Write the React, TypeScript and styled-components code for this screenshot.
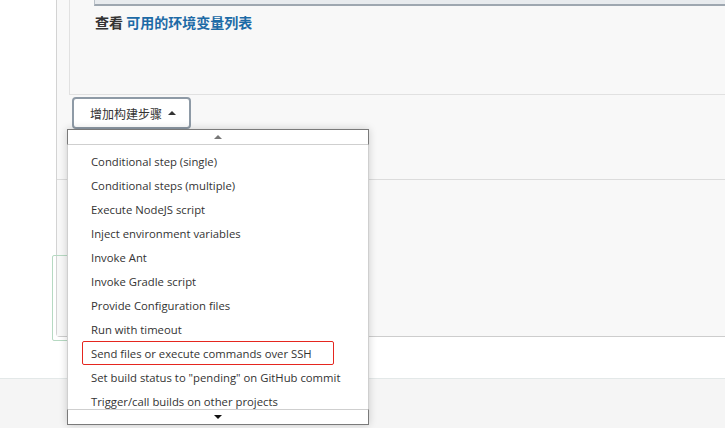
import React from "react";
import styled, { createGlobalStyle } from "styled-components";

const Global = createGlobalStyle`
  html, body { margin: 0; padding: 0; background: #fff; }
  body { width: 725px; height: 428px; overflow: hidden; font-family: "Open Sans", "Noto Sans CJK SC", sans-serif; }
`;

const Page = styled.div`
  position: relative;
  width: 725px;
  height: 428px;
  display: flex;
  flex-direction: column;
  background: #fff;
  overflow: hidden;
`;

const Upper = styled.div`
  height: 378px;
  display: flex;
  flex-direction: column;
  background: #fff;
`;

const Panel = styled.div`
  margin-left: 56px;
  height: 337px;
  box-sizing: border-box;
  border-left: 1px solid #d3d3d3;
  border-bottom: 1px solid #cdcdcd;
  border-bottom-left-radius: 4px;
  background: #f8f8f8;
  display: flex;
  flex-direction: column;
`;

const BuildSection = styled.div`
  padding-left: 12px;
  height: 95px;
  box-sizing: border-box;
  display: flex;
`;

const InnerBox = styled.div`
  flex: 1;
  border-left: 1px solid #e1e1e1;
  border-bottom: 1px solid #e1e1e1;
  padding-left: 24px;
  display: flex;
  flex-direction: column;
`;

const TextareaEdge = styled.div`
  height: 4px;
  background: #e8ebee;
  border-bottom: 2px solid #9ea7b0;
  border-left: 1px solid #b9c0c7;
`;

const HelpLine = styled.div`
  margin-top: 6px;
  height: 20px;
  line-height: 20px;
  font-family: "Noto Sans CJK SC", sans-serif;
  font-size: 14px;
  font-weight: 700;
  color: #333;
  padding-left: 1px;
`;

const HelpLink = styled.a`
  color: #1d6aa6;
  text-decoration: none;
`;

const ButtonRow = styled.div`
  height: 85px;
  box-sizing: border-box;
  padding: 2px 0 0 15px;
  border-bottom: 1px solid #dcdcdc;
`;

const AddButton = styled.button`
  width: 119px;
  height: 32px;
  box-sizing: border-box;
  border: 2px solid #8e9aa6;
  border-radius: 4px;
  background: #fff;
  display: flex;
  align-items: center;
  padding: 0 0 0 16px;
  gap: 6px;
  font-family: "Noto Sans CJK SC", sans-serif;
  font-size: 12px;
  color: #333;
`;

const Caret = styled.span<{ $up?: boolean; $color?: string }>`
  width: 0;
  height: 0;
  border-left: 4px solid transparent;
  border-right: 4px solid transparent;
  ${(p) =>
    p.$up
      ? `border-bottom: 4px solid ${p.$color || "#333"};`
      : `border-top: 4px solid ${p.$color || "#333"};`}
`;

const LowerSection = styled.div`
  flex: 1;
  background: #f8f8f8;
`;

const Footer = styled.div`
  flex: 1;
  background: #f5f5f5;
  border-top: 1px solid #e3e8e8;
`;

const GreenOutline = styled.div`
  position: absolute;
  left: 52px;
  top: 255px;
  width: 120px;
  height: 86px;
  box-sizing: border-box;
  border: 1px solid #b6d9c2;
  border-radius: 2px;
`;

const Menu = styled.div`
  position: absolute;
  left: 67px;
  top: 129px;
  width: 302px;
  height: 296px;
  display: flex;
  flex-direction: column;
  box-shadow: 0 0 8px rgba(0, 0, 0, 0.18);
  background: #fff;
`;

const ScrollArrow = styled.div<{ $top?: boolean }>`
  height: 16px;
  box-sizing: border-box;
  display: flex;
  align-items: center;
  justify-content: center;
  background: #fff;
  border: 1px solid #7a7a7a;
  ${(p) => (p.$top ? "border-bottom: 1px solid #cfcfcf;" : "border-top: 1px solid #cfcfcf;")}
`;

const List = styled.ul`
  list-style: none;
  margin: 0;
  padding: 4px 0 0;
  flex: 1;
  overflow: hidden;
  border-left: 1px solid #cfcfcf;
  border-right: 1px solid #cfcfcf;
`;

const Item = styled.li`
  height: 24px;
  padding-left: 14px;
  display: flex;
  align-items: center;
`;

const Label = styled.span<{ $marked?: boolean }>`
  height: 24px;
  box-sizing: border-box;
  display: inline-flex;
  align-items: center;
  padding: 0 21px 0 8px;
  border: 1px solid ${(p) => (p.$marked ? "#e5261f" : "transparent")};
  border-radius: 2px;
  font-family: "Open Sans", sans-serif;
  font-size: 11.3px;
  color: #333;
  white-space: nowrap;
`;

const items = [
  "Conditional step (single)",
  "Conditional steps (multiple)",
  "Execute NodeJS script",
  "Inject environment variables",
  "Invoke Ant",
  "Invoke Gradle script",
  "Provide Configuration files",
  "Run with timeout",
  "Send files or execute commands over SSH",
  'Set build status to "pending" on GitHub commit',
  "Trigger/call builds on other projects",
];

export default function App() {
  return (
    <Page>
      <Global />
      <Upper>
        <Panel>
          <BuildSection>
            <InnerBox>
              <TextareaEdge />
              <HelpLine>
                查看 <HelpLink href="#">可用的环境变量列表</HelpLink>
              </HelpLine>
            </InnerBox>
          </BuildSection>
          <ButtonRow>
            <AddButton>
              增加构建步骤
              <Caret $up />
            </AddButton>
          </ButtonRow>
          <LowerSection />
        </Panel>
      </Upper>
      <Footer />
      <GreenOutline />
      <Menu>
        <ScrollArrow $top>
          <Caret $up $color="#777" />
        </ScrollArrow>
        <List>
          {items.map((t) => (
            <Item key={t}>
              <Label $marked={t.startsWith("Send files")}>{t}</Label>
            </Item>
          ))}
        </List>
        <ScrollArrow>
          <Caret $color="#111" />
        </ScrollArrow>
      </Menu>
    </Page>
  );
}
